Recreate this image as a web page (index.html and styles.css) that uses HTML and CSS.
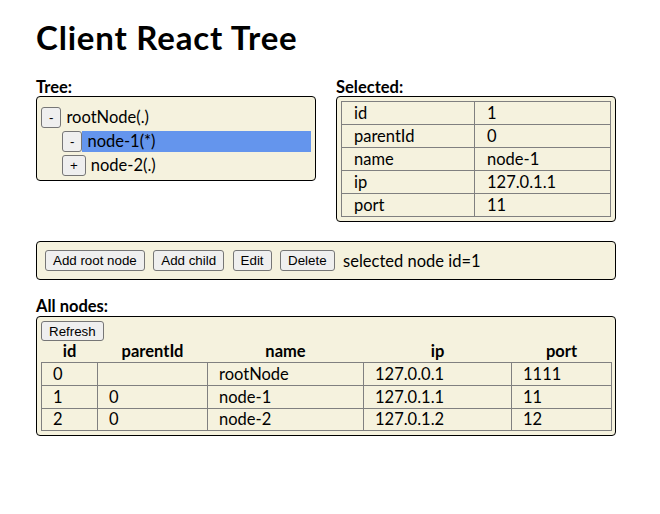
FILE: index.html
```html
<!DOCTYPE html>
<html>
<head>
<meta charset="utf-8">
<link rel="stylesheet" href="styles.css">
</head>
<body>
<div class="page">
  <h1 class="title">Client React Tree</h1>
  <div class="top">
    <section class="panel">
      <div class="label">Tree:</div>
      <div class="box tree">
        <div class="node">
          <div class="row"><button class="btn">-</button><span class="name">rootNode(.)</span></div>
          <div class="children">
            <div class="node">
              <div class="row"><button class="btn">-</button><span class="name selected">node-1(*)</span></div>
            </div>
            <div class="node">
              <div class="row"><button class="btn">+</button><span class="name">node-2(.)</span></div>
            </div>
          </div>
        </div>
      </div>
    </section>
    <section class="panel">
      <div class="label">Selected:</div>
      <div class="box">
        <table class="grid sel">
          <colgroup><col class="c-key"><col></colgroup>
          <tbody>
            <tr><td>id</td><td>1</td></tr>
            <tr><td>parentId</td><td>0</td></tr>
            <tr><td>name</td><td>node-1</td></tr>
            <tr><td>ip</td><td>127.0.1.1</td></tr>
            <tr><td>port</td><td>11</td></tr>
          </tbody>
        </table>
      </div>
    </section>
  </div>
  <div class="box actions">
    <button class="btn">Add root node</button>
    <button class="btn">Add child</button>
    <button class="btn">Edit</button>
    <button class="btn">Delete</button>
    <span class="status">selected node id=1</span>
  </div>
  <section class="all">
    <div class="label">All nodes:</div>
    <div class="box">
      <button class="btn refresh">Refresh</button>
      <table class="grid nodes">
        <colgroup>
          <col class="c-id"><col class="c-pid"><col class="c-name"><col class="c-ip"><col class="c-port">
        </colgroup>
        <thead>
          <tr><th>id</th><th>parentId</th><th>name</th><th>ip</th><th>port</th></tr>
        </thead>
        <tbody>
          <tr><td>0</td><td></td><td>rootNode</td><td>127.0.0.1</td><td>1111</td></tr>
          <tr><td>1</td><td>0</td><td>node-1</td><td>127.0.1.1</td><td>11</td></tr>
          <tr><td>2</td><td>0</td><td>node-2</td><td>127.0.1.2</td><td>12</td></tr>
        </tbody>
      </table>
    </div>
  </section>
</div>
</body>
</html>
```

FILE: styles.css
```css
html, body {
  margin: 0;
  padding: 0;
  background: #ffffff;
}
body {
  font-family: Lato, "Noto Sans", sans-serif;
  font-size: 16.5px;
  line-height: 18.4px;
  color: #000;
}
.page {
  padding: 19px 36px;
  width: 580px;
}
.title {
  margin: 0 0 22px;
  font-size: 33px;
  line-height: 37px;
  letter-spacing: 0.8px;
  font-weight: bold;
}
.top {
  display: flex;
  gap: 20px;
  align-items: flex-start;
}
.panel {
  width: 280px;
}
.label {
  font-weight: bold;
}
.box {
  border: 1px solid #000;
  border-radius: 4px;
  background: #f5f2de;
  padding: 4px;
}
.btn {
  font-family: "Liberation Sans", Arial, sans-serif;
  font-size: 13.33px;
  line-height: 15px;
  height: 20.5px;
  box-sizing: border-box;
  padding: 1px 7px;
  border: 1px solid #767676;
  border-radius: 3px;
  background: #efefef;
  color: #000;
  margin: 0;
}
.tree {
  padding: 10px 4px 4px;
}
.row {
  display: flex;
  align-items: stretch;
}
.children > .node > .row {
  margin-top: 3.5px;
}
.children {
  padding-left: 21px;
}
.name {
  display: flex;
  align-items: center;
  padding-left: 5px;
  flex: 1;
}
.name.selected {
  background: #6495ed;
}
.grid {
  width: 100%;
  border-collapse: collapse;
  table-layout: fixed;
}
.grid td {
  border: 1px solid #808080;
  padding: 1.5px 12px;
  line-height: 19px;
  text-align: left;
}
.grid th {
  padding: 1px 12px;
  line-height: 19px;
  font-weight: bold;
  text-align: center;
}
.nodes td {
  padding-left: 11px;
  line-height: 18.7px;
}
.c-key { width: 133px; }
.c-id { width: 56px; }
.c-pid { width: 110px; }
.c-name { width: 156px; }
.c-ip { width: 148px; }
.c-port { width: 100px; }
.actions {
  margin-top: 19px;
  display: flex;
  align-items: center;
}
.actions .btn {
  height: 21px;
  margin: 4px 4.5px 4px 4px;
}
.status {
  margin-left: 4px;
}
.all {
  margin-top: 17px;
}
.refresh {
  display: block;
}
```
